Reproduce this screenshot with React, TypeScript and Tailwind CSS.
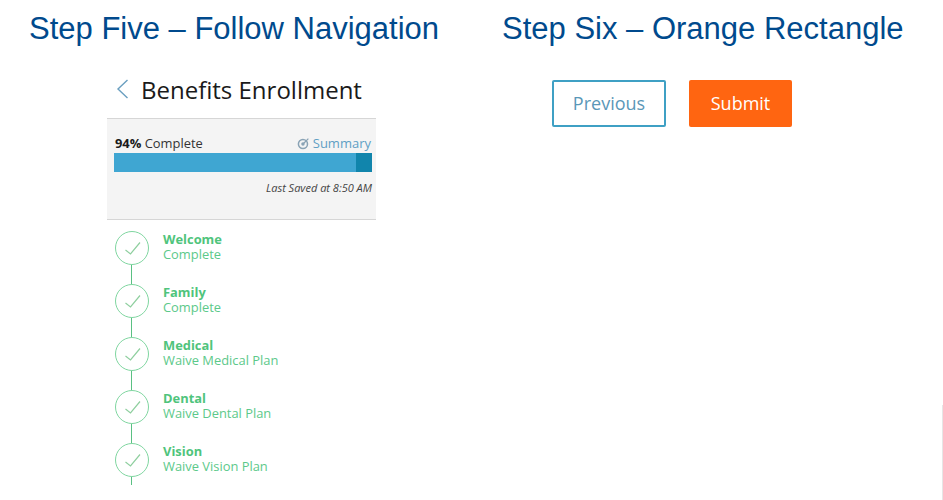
const steps = [
  { name: 'Welcome', status: 'Complete' },
  { name: 'Family', status: 'Complete' },
  { name: 'Medical', status: 'Waive Medical Plan' },
  { name: 'Dental', status: 'Waive Dental Plan' },
  { name: 'Vision', status: 'Waive Vision Plan' },
]

function Step({ name, status, last }: { name: string; status: string; last: boolean }) {
  return (
    <div className={`flex gap-[14px] pl-2 ${last ? 'h-[42px]' : 'h-[53px]'}`}>
      <div className="flex w-[34px] flex-col">
        <div className="flex h-[34px] w-[34px] shrink-0 items-center justify-center rounded-full border border-[#7fd6a0]">
          <svg width="18" height="14" viewBox="0 0 18 14" fill="none">
            <path d="M2.5 9 L7.5 13 L17 1.5" stroke="#8fcf9f" strokeWidth="1.2" />
          </svg>
        </div>
        <div className="ml-4 w-px flex-1 bg-[#5ac083]" />
      </div>
      <div className="text-[12.9px] leading-4 text-[#4fc47c]">
        <p className="font-bold">{name}</p>
        <p className="-mt-px text-[#5cc98a]">{status}</p>
      </div>
    </div>
  )
}

export default function App() {
  return (
    <div className="relative flex h-[500px] w-[943px] overflow-hidden bg-white font-['Open_Sans',sans-serif]">
      {/* Step five */}
      <div className="w-[467px] pt-[10px]">
        <h1 className="ml-[29px] font-['Liberation_Sans',sans-serif] text-[31px] leading-[38px] text-[#004a8d]">
          Step Five – Follow Navigation
        </h1>
        <div className="ml-[107px] w-[269px]">
          <div className="mt-[23px] flex h-[47px] items-start pl-[9px]">
            <svg className="mt-[8px]" width="13" height="20" viewBox="0 0 13 20" fill="none">
              <path d="M11.5 1 L2 10 L11.5 19" stroke="#6a9fc0" strokeWidth="1.4" />
            </svg>
            <span className="mt-px ml-[12px] text-2xl leading-9 text-[#1a1a1a]">Benefits Enrollment</span>
          </div>
          <div className="h-[102px] border-y border-[#d6d6d6] bg-[#f4f4f4] px-[7px] pt-[15px]">
            <div className="flex items-center justify-between text-[13px] leading-[18px]">
              <span className="ml-px text-[12.9px] text-[#333333]">
                <b className="text-[#1a1a1a]">94%</b> Complete
              </span>
              <span className="-mr-[2px] flex items-center gap-[3px] text-[#5f9fc4]">
                <svg width="13" height="13" viewBox="0 0 12 12" fill="none">
                  <circle cx="5.5" cy="6.5" r="4.2" stroke="#8aa3b5" strokeWidth="1.4" />
                  <circle cx="5.5" cy="6.5" r="1.6" fill="#8aa3b5" />
                  <path d="M6 6 L10.5 1.5" stroke="#8aa3b5" strokeWidth="1.2" />
                </svg>
                Summary
              </span>
            </div>
            <div className="mt-px flex h-[19px] w-[258px] justify-end bg-[#3fa6d2]">
              <div className="w-[16px] bg-[#1185ac]" />
            </div>
            <p className="mt-[8px] -mr-[3px] text-right text-[11px] leading-[15px] text-[#444444] italic">
              Last Saved at 8:50 AM
            </p>
          </div>
          <div className="pt-[11px]">
            {steps.map((s, i) => (
              <Step key={s.name} name={s.name} status={s.status} last={i === steps.length - 1} />
            ))}
          </div>
        </div>
      </div>

      {/* Step six */}
      <div className="flex-1 pt-[11px]">
        <h1 className="ml-[35px] font-['Liberation_Sans',sans-serif] text-[31px] leading-[36px] text-[#004a8d]">
          Step Six – Orange Rectangle
        </h1>
        <div className="mt-[33px] ml-[85px] flex gap-[23px]">
          <button className="h-[47px] w-[114px] rounded-[2px] border-2 border-[#3fa0c4] bg-white text-[18px] text-[#5a97b8]">
            Previous
          </button>
          <button className="h-[47px] w-[103px] rounded-[2px] bg-[#ff6511] text-[18px] font-medium text-white">
            Submit
          </button>
        </div>
      </div>

      <div className="absolute right-0 bottom-0 h-[95px] w-px bg-[#e6e6e6]" />
    </div>
  )
}
